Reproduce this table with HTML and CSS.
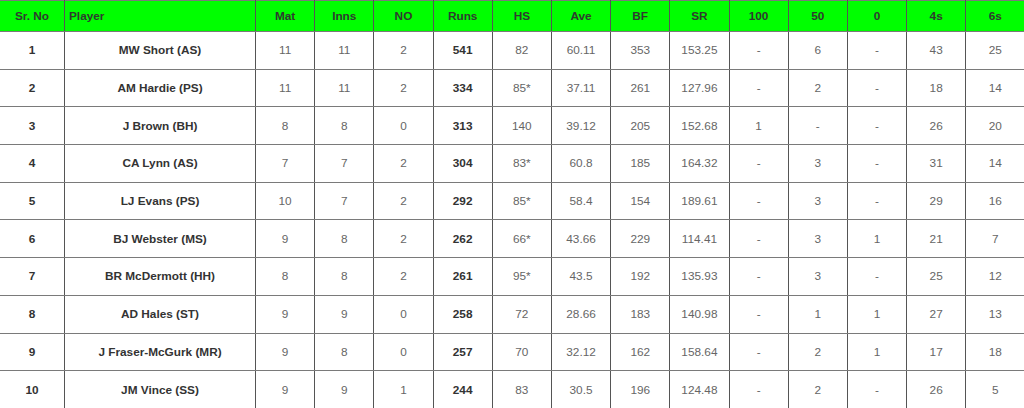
FILE: index.html
```html
<!DOCTYPE html>
<html>
<head>
<meta charset="utf-8">
<link rel="stylesheet" href="styles.css">
</head>
<body>
<table class="stats">
<colgroup>
<col class="c-sr"><col class="c-player">
<col class="c-n"><col class="c-n"><col class="c-n"><col class="c-n"><col class="c-n"><col class="c-n"><col class="c-n"><col class="c-n"><col class="c-n"><col class="c-n"><col class="c-n"><col class="c-n"><col class="c-n">
</colgroup>
<thead>
<tr><th>Sr. No</th><th class="left">Player</th><th>Mat</th><th>Inns</th><th>NO</th><th>Runs</th><th>HS</th><th>Ave</th><th>BF</th><th>SR</th><th>100</th><th>50</th><th>0</th><th>4s</th><th>6s</th></tr>
</thead>
<tbody>
<tr><td class="b">1</td><td class="b">MW Short (AS)</td><td>11</td><td>11</td><td>2</td><td class="b">541</td><td>82</td><td>60.11</td><td>353</td><td>153.25</td><td>-</td><td>6</td><td>-</td><td>43</td><td>25</td></tr>
<tr><td class="b">2</td><td class="b">AM Hardie (PS)</td><td>11</td><td>11</td><td>2</td><td class="b">334</td><td>85*</td><td>37.11</td><td>261</td><td>127.96</td><td>-</td><td>2</td><td>-</td><td>18</td><td>14</td></tr>
<tr><td class="b">3</td><td class="b">J Brown (BH)</td><td>8</td><td>8</td><td>0</td><td class="b">313</td><td>140</td><td>39.12</td><td>205</td><td>152.68</td><td>1</td><td>-</td><td>-</td><td>26</td><td>20</td></tr>
<tr><td class="b">4</td><td class="b">CA Lynn (AS)</td><td>7</td><td>7</td><td>2</td><td class="b">304</td><td>83*</td><td>60.8</td><td>185</td><td>164.32</td><td>-</td><td>3</td><td>-</td><td>31</td><td>14</td></tr>
<tr><td class="b">5</td><td class="b">LJ Evans (PS)</td><td>10</td><td>7</td><td>2</td><td class="b">292</td><td>85*</td><td>58.4</td><td>154</td><td>189.61</td><td>-</td><td>3</td><td>-</td><td>29</td><td>16</td></tr>
<tr><td class="b">6</td><td class="b">BJ Webster (MS)</td><td>9</td><td>8</td><td>2</td><td class="b">262</td><td>66*</td><td>43.66</td><td>229</td><td>114.41</td><td>-</td><td>3</td><td>1</td><td>21</td><td>7</td></tr>
<tr><td class="b">7</td><td class="b">BR McDermott (HH)</td><td>8</td><td>8</td><td>2</td><td class="b">261</td><td>95*</td><td>43.5</td><td>192</td><td>135.93</td><td>-</td><td>3</td><td>-</td><td>25</td><td>12</td></tr>
<tr><td class="b">8</td><td class="b">AD Hales (ST)</td><td>9</td><td>9</td><td>0</td><td class="b">258</td><td>72</td><td>28.66</td><td>183</td><td>140.98</td><td>-</td><td>1</td><td>1</td><td>27</td><td>13</td></tr>
<tr><td class="b">9</td><td class="b">J Fraser-McGurk (MR)</td><td>9</td><td>8</td><td>0</td><td class="b">257</td><td>70</td><td>32.12</td><td>162</td><td>158.64</td><td>-</td><td>2</td><td>1</td><td>17</td><td>18</td></tr>
<tr><td class="b">10</td><td class="b">JM Vince (SS)</td><td>9</td><td>9</td><td>1</td><td class="b">244</td><td>83</td><td>30.5</td><td>196</td><td>124.48</td><td>-</td><td>2</td><td>-</td><td>26</td><td>5</td></tr>
</tbody>
</table>
</body>
</html>
```
FILE: styles.css
```css
html, body {
  margin: 0;
  padding: 0;
  overflow: hidden;
  background: #ffffff;
}
.stats {
  border-collapse: collapse;
  table-layout: fixed;
  width: 1026px;
  margin-left: -1px;
  font-family: "Liberation Sans", Arial, sans-serif;
  font-size: 11.8px;
}
.c-sr { width: 65px; }
.c-player { width: 191px; }
.c-n { width: 59.2px; }
.stats th, .stats td {
  border-left: 1px solid #555;
  border-right: 1px solid #555;
  border-top: 1px solid #7a7a7a;
  border-bottom: 1px solid #7a7a7a;
  text-align: center;
  padding: 0 4px;
  overflow: hidden;
  white-space: nowrap;
}
.stats th {
  background: #00ff00;
  color: #2f3a2f;
  font-weight: bold;
  height: 30px;
}
.stats th.left { text-align: left; }
.stats td {
  color: #666;
  height: 36.7px;
}
.stats td.b {
  color: #333;
  font-weight: bold;
}
```
